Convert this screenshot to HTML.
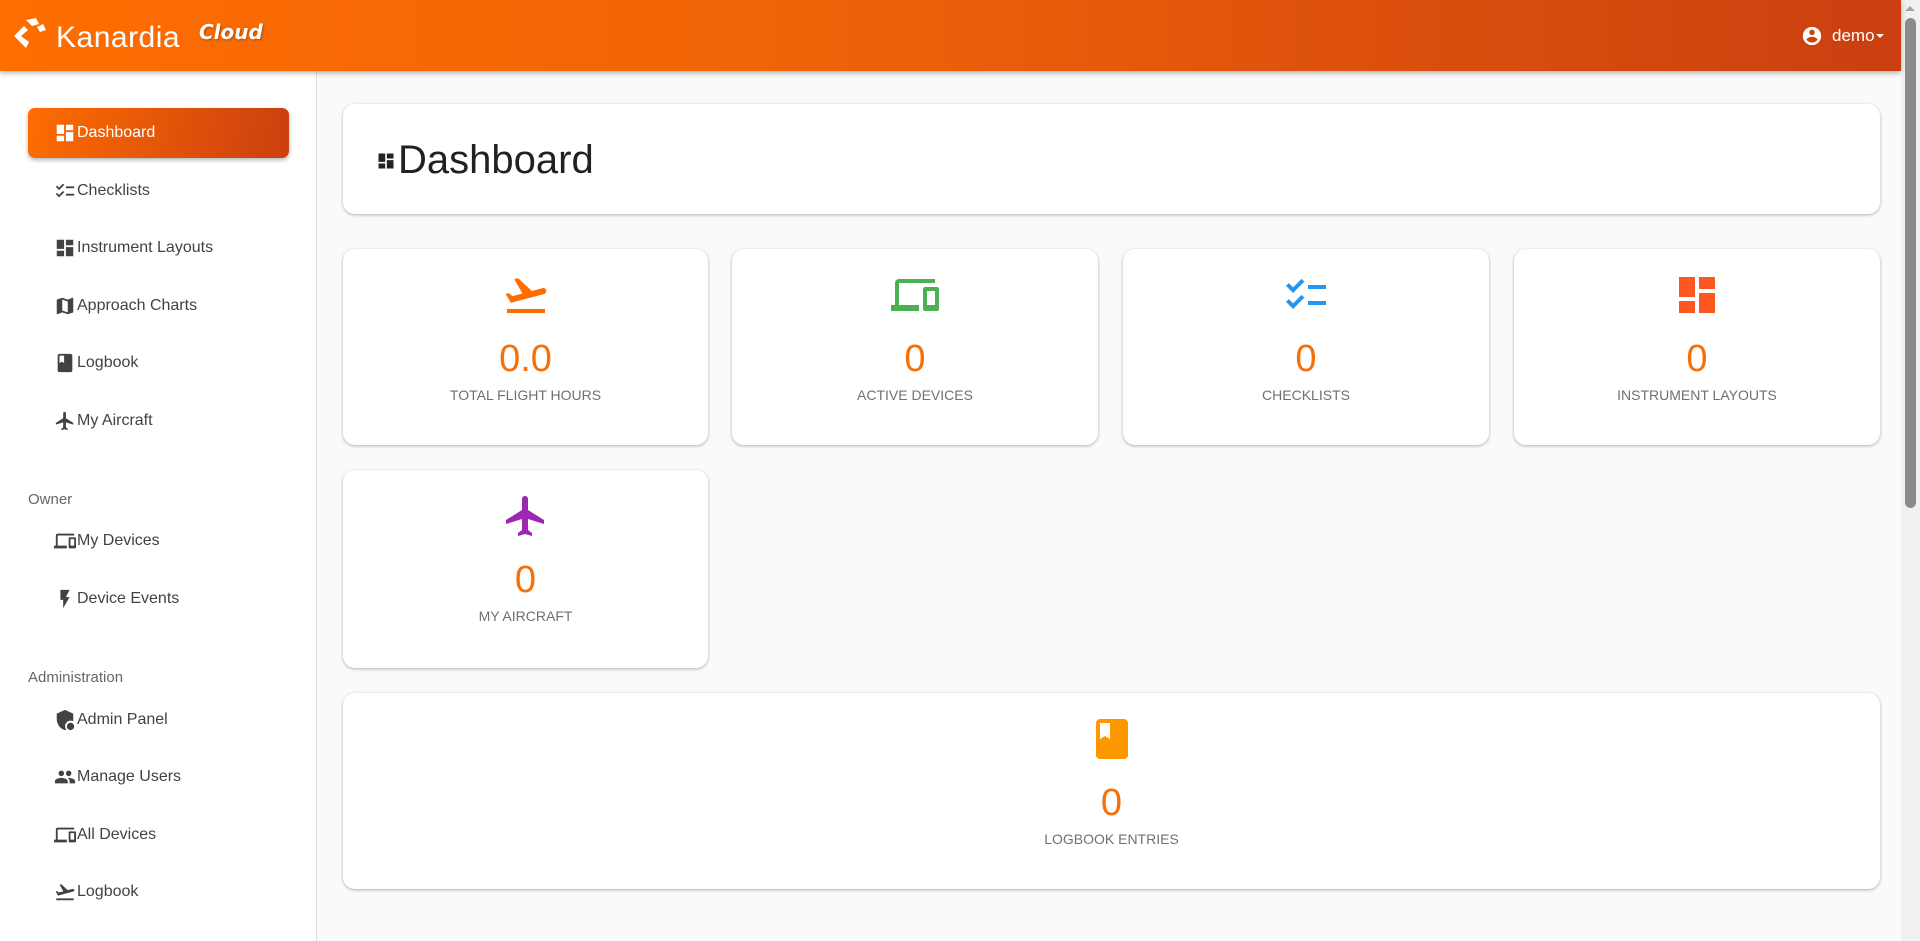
<!DOCTYPE html>
<html><head><meta charset="utf-8"><style>
*{box-sizing:border-box;margin:0;padding:0}
body{width:1920px;height:941px;overflow:hidden;font-family:"Liberation Sans",sans-serif;background:#fafafa;position:relative}
.hdr{position:absolute;left:0;top:0;width:1901px;height:71px;background:linear-gradient(90deg,#fe6d00 0%,#f06508 40%,#cb3f10 100%);box-shadow:0 2px 5px rgba(0,0,0,.3);z-index:3}
.side{position:absolute;left:0;top:71px;width:317px;height:870px;background:#fff;border-right:1px solid #e0e0e0}
.nav{position:absolute;left:54px;height:24px;display:flex;align-items:center;font-size:16px;color:#424242}
.nav svg{width:22px;height:22px;fill:#424242;margin-right:1px}
.act{position:absolute;left:28px;top:108px;width:261px;height:50px;border-radius:7px;background:linear-gradient(100deg,#fd6d00,#cb3f10);box-shadow:0 2px 4px rgba(0,0,0,.3)}
.sec{position:absolute;left:28px;font-size:15px;color:#666}
.card{position:absolute;background:#fff;border-radius:12px;box-shadow:0 1px 3px rgba(0,0,0,.3)}
.stat{text-align:center}
.stat svg{position:absolute;left:50%;margin-left:-24px;top:22px;width:48px;height:48px}
.num{position:absolute;left:0;right:0;top:89px;font-size:38px;font-weight:300;color:#f57009}
.lbl{position:absolute;left:0;right:0;top:138px;font-size:14px;color:#707070;letter-spacing:0}
.sb{position:absolute;right:0;top:0;width:19px;height:941px;background:#f1f1f1}
</style></head><body>
<div class="hdr">
<svg style="position:absolute;left:12px;top:18px" width="38" height="34" viewBox="0 0 38 34"><path d="M14 2 L24 0 L27 6 L20 8 Z M2 18 L12 8 L16 12 L9 18 L17 24 L14 30 Z M25 9 L31 6 L34 12 L28 14 Z" fill="#fff"/></svg>
<div style="position:absolute;left:56px;top:21px;font-size:30px;color:#fff;letter-spacing:.5px">Kanardia</div>
<div style="position:absolute;left:199px;top:20px;font-size:20px;color:#fff;font-style:italic;font-weight:bold;font-family:'DejaVu Sans',sans-serif;text-shadow:1px 1px 2px rgba(0,0,0,.3)">Cloud</div>
<svg style="position:absolute;left:1801px;top:25px" width="22" height="22" viewBox="0 0 24 24" fill="#fff"><path d="M12 2C6.48 2 2 6.48 2 12s4.48 10 10 10 10-4.48 10-10S17.520 2 12 2zm0 3c1.66 0 3 1.34 3 3s-1.34 3-3 3-3-1.34-3-3 1.34-3 3-3zm0 14.2c-2.5 0-4.71-1.28-6-3.22.03-1.99 4-3.080 6-3.08 1.99 0 5.97 1.09 6 3.08-1.29 1.94-3.5 3.22-6 3.22z"/></svg>
<div style="position:absolute;left:1832px;top:26px;font-size:17px;color:#fff">demo</div>
<div style="position:absolute;left:1876px;top:34px;width:0;height:0;border-left:4px solid transparent;border-right:4px solid transparent;border-top:4px solid #fff"></div>
</div>
<div class="side">
</div>
<div class="act"></div>
<div class="nav" style="top:121px;color:#fff"><svg viewBox="0 0 24 24" style="fill:#fff"><path d="M3 13h8V3H3v10zm0 8h8v-6H3v6zm10 0h8V11h-8v10zm0-18v6h8V3h-8z"/></svg>Dashboard</div>
<div class="nav" style="top:179px"><svg viewBox="0 0 24 24"><path d="M22 7h-9v2h9V7zm0 8h-9v2h9v-2zM5.54 11L2 7.46l1.41-1.41 2.12 2.12 4.24-4.24 1.41 1.41L5.54 11zm0 8L2 15.46l1.41-1.41 2.12 2.12 4.24-4.24 1.41 1.41L5.54 19z"/></svg>Checklists</div>
<div class="nav" style="top:236px"><svg viewBox="0 0 24 24"><path d="M3 13h8V3H3v10zm0 8h8v-6H3v6zm10 0h8V11h-8v10zm0-18v6h8V3h-8z"/></svg>Instrument Layouts</div>
<div class="nav" style="top:294px"><svg viewBox="0 0 24 24"><path d="M20.5 3l-.16.03L15 5.1 9 3 3.36 4.9c-.21.07-.36.25-.36.48V20.5c0 .28.22.5.5.5l.16-.03L9 18.9l6 2.1 5.64-1.9c.21-.07.36-.25.36-.48V3.5c0-.28-.22-.5-.5-.5zM15 19l-6-2.11V5l6 2.11V19z"/></svg>Approach Charts</div>
<div class="nav" style="top:351px"><svg viewBox="0 0 24 24"><path d="M18 2H6c-1.1 0-2 .9-2 2v16c0 1.1.9 2 2 2h12c1.1 0 2-.9 2-2V4c0-1.1-.9-2-2-2zM6 4h5v8l-2.5-1.5L6 12V4z"/></svg>Logbook</div>
<div class="nav" style="top:409px"><svg viewBox="0 0 24 24"><path d="M21 16v-2l-8-5V3.5c0-.83-.67-1.5-1.5-1.5S10 2.67 10 3.5V9l-8 5v2l8-2.5V19l-2 1.5V22l3.5-1 3.5 1v-1.5L13 19v-5.5l8 2.5z"/></svg>My Aircraft</div>
<div class="sec" style="top:491px">Owner</div>
<div class="nav" style="top:529px"><svg viewBox="0 0 24 24"><path d="M4 6h18V4H4c-1.1 0-2 .9-2 2v11H0v3h14v-3H4V6zm19 2h-6c-.55 0-1 .45-1 1v10c0 .55.45 1 1 1h6c.55 0 1-.45 1-1V9c0-.55-.45-1-1-1zm-1 9h-4v-7h4v7z"/></svg>My Devices</div>
<div class="nav" style="top:587px"><svg viewBox="0 0 24 24"><path d="M7 2v11h3v9l7-12h-4l4-8z"/></svg>Device Events</div>
<div class="sec" style="top:669px">Administration</div>
<div class="nav" style="top:708px"><svg viewBox="0 0 24 24"><path d="M12 1L3 5v6c0 5.55 3.84 10.74 9 12 .5-.1 1-.3 1.4-.5A6 6 0 0 1 21 13.5V5l-9-4z"/><circle cx="18" cy="19" r="4"/></svg>Admin Panel</div>
<div class="nav" style="top:765px"><svg viewBox="0 0 24 24"><path d="M16 11c1.66 0 2.99-1.34 2.99-3S17.66 5 16 5c-1.66 0-3 1.34-3 3s1.34 3 3 3zm-8 0c1.66 0 2.99-1.34 2.99-3S9.66 5 8 5C6.34 5 5 6.34 5 8s1.34 3 3 3zm0 2c-2.33 0-7 1.17-7 3.5V19h14v-2.5c0-2.330-4.67-3.5-7-3.5zm8 0c-.29 0-.62.02-.97.05 1.16.84 1.97 1.97 1.97 3.45V19h6v-2.5c0-2.33-4.67-3.5-7-3.5z"/></svg>Manage Users</div>
<div class="nav" style="top:823px"><svg viewBox="0 0 24 24"><path d="M4 6h18V4H4c-1.1 0-2 .9-2 2v11H0v3h14v-3H4V6zm19 2h-6c-.55 0-1 .45-1 1v10c0 .55.45 1 1 1h6c.55 0 1-.45 1-1V9c0-.55-.45-1-1-1zm-1 9h-4v-7h4v7z"/></svg>All Devices</div>
<div class="nav" style="top:880px"><svg viewBox="0 0 24 24"><path d="M2.5 19h19v2h-19v-2zm19.57-9.36c-.21-.8-1.04-1.28-1.84-1.06L14.92 10l-6.9-6.43-1.93.51 4.14 7.17-4.97 1.33-1.97-1.54-1.45.39 1.82 3.16.77 1.33 1.6-.43 5.31-1.42 4.35-1.16L21 11.49c.81-.23 1.28-1.05 1.07-1.85z"/></svg>Logbook</div>

<div class="card" style="left:343px;top:104px;width:1537px;height:110px">
<svg style="position:absolute;left:33px;top:47px" width="20" height="20" viewBox="0 0 24 24" fill="#222"><path d="M3 13h8V3H3v10zm0 8h8v-6H3v6zm10 0h8V11h-8v10zm0-18v6h8V3h-8z"/></svg>
<div style="position:absolute;left:55px;top:34px;font-size:40px;color:#212121">Dashboard</div></div>

<div class="card stat" style="left:343px;top:249px;width:365px;height:196px"><svg viewBox="0 0 24 24" fill="#ff6d00"><path d="M2.5 19h19v2h-19v-2zm19.57-9.36c-.21-.8-1.04-1.28-1.84-1.06L14.92 10l-6.9-6.43-1.93.51 4.14 7.17-4.97 1.33-1.97-1.54-1.45.39 1.82 3.16.77 1.33 1.6-.43 5.31-1.42 4.35-1.16L21 11.49c.81-.23 1.28-1.05 1.07-1.85z"/></svg><div class="num">0.0</div><div class="lbl">TOTAL FLIGHT HOURS</div></div>
<div class="card stat" style="left:732px;top:249px;width:366px;height:196px"><svg viewBox="0 0 24 24" fill="#4caf50"><path d="M4 6h18V4H4c-1.1 0-2 .9-2 2v11H0v3h14v-3H4V6zm19 2h-6c-.55 0-1 .45-1 1v10c0 .55.45 1 1 1h6c.55 0 1-.45 1-1V9c0-.55-.45-1-1-1zm-1 9h-4v-7h4v7z"/></svg><div class="num">0</div><div class="lbl">ACTIVE DEVICES</div></div>
<div class="card stat" style="left:1123px;top:249px;width:366px;height:196px"><svg viewBox="0 0 24 24" fill="#2196f3"><path d="M22 7h-9v2h9V7zm0 8h-9v2h9v-2zM5.54 11L2 7.46l1.41-1.41 2.12 2.12 4.24-4.24 1.41 1.41L5.54 11zm0 8L2 15.46l1.41-1.41 2.12 2.12 4.24-4.24 1.41 1.41L5.54 19z"/></svg><div class="num">0</div><div class="lbl">CHECKLISTS</div></div>
<div class="card stat" style="left:1514px;top:249px;width:366px;height:196px"><svg viewBox="0 0 24 24" fill="#ff5722"><path d="M3 13h8V3H3v10zm0 8h8v-6H3v6zm10 0h8V11h-8v10zm0-18v6h8V3h-8z"/></svg><div class="num">0</div><div class="lbl">INSTRUMENT LAYOUTS</div></div>
<div class="card stat" style="left:343px;top:470px;width:365px;height:198px"><svg viewBox="0 0 24 24" fill="#9c27b0"><path d="M21 16v-2l-8-5V3.5c0-.83-.67-1.5-1.5-1.5S10 2.67 10 3.5V9l-8 5v2l8-2.5V19l-2 1.5V22l3.5-1 3.5 1v-1.5L13 19v-5.5l8 2.5z"/></svg><div class="num">0</div><div class="lbl">MY AIRCRAFT</div></div>
<div class="card stat" style="left:343px;top:693px;width:1537px;height:196px"><svg viewBox="0 0 24 24" fill="#ff9800"><path d="M18 2H6c-1.1 0-2 .9-2 2v16c0 1.1.9 2 2 2h12c1.1 0 2-.9 2-2V4c0-1.1-.9-2-2-2zM6 4h5v8l-2.5-1.5L6 12V4z"/></svg><div class="num">0</div><div class="lbl">LOGBOOK ENTRIES</div></div>

<div class="sb"><div style="position:absolute;left:4px;top:6px;width:0;height:0;border-left:5px solid transparent;border-right:5px solid transparent;border-bottom:5px solid #a3a3a3"></div><div style="position:absolute;left:4px;top:18px;width:11px;height:490px;border-radius:6px;background:#8b8b8b"></div></div>
</body></html>
